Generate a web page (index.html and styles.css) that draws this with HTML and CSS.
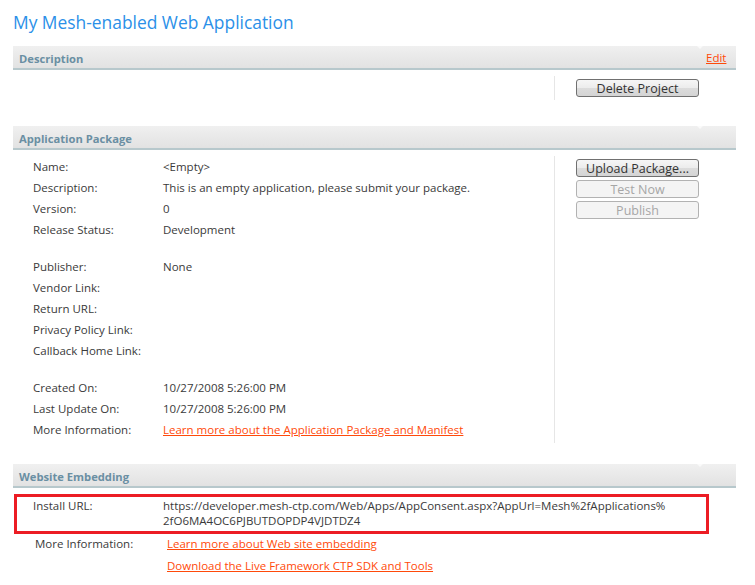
FILE: index.html
```html
<!DOCTYPE html>
<html>
<head>
<meta charset="utf-8">
<title>My Mesh-enabled Web Application</title>
<link rel="stylesheet" href="styles.css">
</head>
<body>
<div class="page">
  <h1 class="title">My Mesh-enabled Web Application</h1>

  <section class="section sec-desc">
    <div class="bar">
      <div class="bar-main">Description</div>
      <div class="bar-side"><a href="#" class="link">Edit</a></div>
    </div>
    <div class="body">
      <div class="main"></div>
      <div class="side">
        <button class="btn">Delete Project</button>
      </div>
    </div>
  </section>

  <section class="section sec-pkg">
    <div class="bar">
      <div class="bar-main">Application Package</div>
      <div class="bar-side"></div>
    </div>
    <div class="body">
      <div class="main">
        <div class="group">
          <div class="row"><span class="lbl">Name:</span><span class="val">&lt;Empty&gt;</span></div>
          <div class="row"><span class="lbl">Description:</span><span class="val">This is an empty application, please submit your package.</span></div>
          <div class="row"><span class="lbl">Version:</span><span class="val">0</span></div>
          <div class="row"><span class="lbl">Release Status:</span><span class="val">Development</span></div>
        </div>
        <div class="group">
          <div class="row"><span class="lbl">Publisher:</span><span class="val">None</span></div>
          <div class="row"><span class="lbl">Vendor Link:</span><span class="val"></span></div>
          <div class="row"><span class="lbl">Return URL:</span><span class="val"></span></div>
          <div class="row"><span class="lbl">Privacy Policy Link:</span><span class="val"></span></div>
          <div class="row"><span class="lbl">Callback Home Link:</span><span class="val"></span></div>
        </div>
        <div class="group">
          <div class="row"><span class="lbl">Created On:</span><span class="val">10/27/2008 5:26:00 PM</span></div>
          <div class="row"><span class="lbl">Last Update On:</span><span class="val">10/27/2008 5:26:00 PM</span></div>
          <div class="row"><span class="lbl">More Information:</span><span class="val"><a href="#" class="link">Learn more about the Application Package and Manifest</a></span></div>
        </div>
      </div>
      <div class="side">
        <button class="btn">Upload Package...</button>
        <button class="btn" disabled>Test Now</button>
        <button class="btn" disabled>Publish</button>
      </div>
    </div>
  </section>

  <section class="section sec-web">
    <div class="bar">
      <div class="bar-main">Website Embedding</div>
      <div class="bar-side"></div>
    </div>
    <div class="install">
      <span class="lbl">Install URL:</span>
      <span class="url">https://developer.mesh-ctp.com/Web/Apps/AppConsent.aspx?AppUrl=Mesh%2fApplications%<br>2fO6MA4OC6PJBUTDOPDP4VJDTDZ4</span>
    </div>
    <div class="more">
      <span class="lbl">More Information:</span>
      <div class="links">
        <a href="#" class="link">Learn more about Web site embedding</a>
        <a href="#" class="link">Download the Live Framework CTP SDK and Tools</a>
      </div>
    </div>
  </section>
</div>
</body>
</html>
```

FILE: styles.css
```css
* { box-sizing: border-box; }
html, body { margin: 0; padding: 0; background: #fff; }
body {
  font-family: "Open Sans", "Noto Sans", "DejaVu Sans", sans-serif;
  font-size: 11.5px;
  color: #3a3a3a;
}
.page {
  width: 736px;
  padding-left: 13px;
}
.title {
  margin: 0;
  padding-top: 9px;
  height: 46px;
  font-size: 17.4px;
  font-weight: normal;
  color: #2b90e8;
  line-height: 26px;
}
.bar {
  display: flex;
  height: 24px;
  border-bottom: 2px solid #b7c8cc;
  background: linear-gradient(#f0f0f0, #e2e2e2);
}
.bar-main {
  flex: 1;
  padding-left: 6px;
  line-height: 25px;
  font-weight: bold;
  font-size: 11.2px;
  color: #6a8fa3;
}
.bar-side {
  width: 36px;
  position: relative;
  line-height: 24px;
  padding-left: 6px;
}
.bar-side::before {
  content: "";
  position: absolute;
  left: -3px;
  top: 0;
  border-left: 3px solid transparent;
  border-right: 3px solid transparent;
  border-top: 3px solid #fafafa;
}
.link {
  color: #ff4a0a;
  text-decoration: underline;
}
.body {
  display: flex;
}
.main {
  width: 542px;
  border-right: 1px solid #e6e6e6;
}
.side {
  display: flex;
  flex-direction: column;
  gap: 3px;
  padding-left: 21px;
}
.btn {
  width: 123px;
  height: 18px;
  padding: 0;
  font-family: "Open Sans", "Noto Sans", sans-serif;
  font-size: 12.5px;
  line-height: 15px;
  color: #333;
  border: 1px solid #707070;
  border-radius: 3px;
  background: linear-gradient(#f6f6f6 0%, #ececec 50%, #dcdcdc 51%, #d4d4d4 100%);
}
.btn:disabled {
  color: #a6a6a6;
  border-color: #b2b2b2;
  background: #f4f4f4;
}
.sec-desc .body {
  margin-top: 6px;
  height: 50px;
}
.sec-desc .main { height: 24px; }
.sec-desc .side { padding-top: 3px; }

.sec-pkg .body {
  margin-top: 6px;
  height: 308px;
}
.sec-pkg .main {
  height: 287px;
  padding-top: 0;
}
.sec-pkg .side { padding-top: 3px; }
.group + .group { margin-top: 16px; }
.row {
  display: flex;
  height: 21px;
  line-height: 21px;
  padding-left: 20px;
}
.row .lbl { width: 130px; }

.install {
  display: flex;
  margin-top: 6px;
  width: 695px;
  margin-left: 1px;
  border: 3px solid #ec1c24;
  padding: 1px 0 3px 16px;
  line-height: 15px;
}
.install .lbl { width: 130px; }
.more {
  display: flex;
  padding-left: 22px;
  margin-top: -1px;
}
.more .lbl {
  width: 132px;
  line-height: 22px;
}
.links {
  display: flex;
  flex-direction: column;
  line-height: 22px;
}
```
